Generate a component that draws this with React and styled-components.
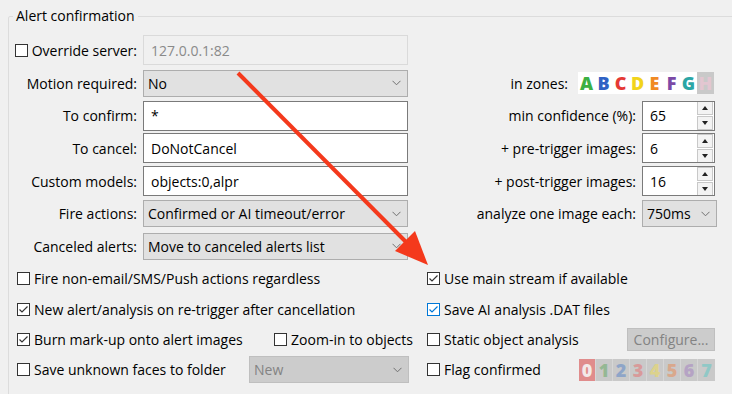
import React from 'react';
import styled, { createGlobalStyle, css } from 'styled-components';

const GlobalStyle = createGlobalStyle`
  html, body {
    margin: 0;
    padding: 0;
    background: #f0f0f0;
    overflow: hidden;
  }
  body {
    font-family: "Open Sans", "Noto Sans", sans-serif;
    font-size: 14px;
    color: #000;
  }
`;

const Page = styled.div`
  position: relative;
  width: 732px;
  height: 394px;
  padding: 6px 0 0 8px;
  box-sizing: border-box;
`;

const GroupBox = styled.fieldset`
  margin: 0;
  padding: 0 0 20px 0;
  width: 740px;
  border: 1px solid #dcdcdc;
  border-radius: 2px;
  box-sizing: border-box;
`;

const Legend = styled.legend`
  margin-left: 4px;
  padding: 0 3px;
  font-size: 14px;
  line-height: 20px;
`;

const FormGrid = styled.div`
  display: grid;
  grid-template-columns: 128px 265px 222px 75px;
  grid-auto-rows: 32.7px;
  column-gap: 6px;
  align-items: center;
  margin-top: 8px;
`;

const Label = styled.div`
  display: flex;
  align-items: center;
  justify-content: flex-end;
  gap: 4px;
  white-space: nowrap;
`;

const fieldBase = css`
  box-sizing: border-box;
  display: flex;
  align-items: center;
  padding: 0 7px;
  white-space: nowrap;
  overflow: hidden;
`;

const TextField = styled.div`
  ${fieldBase};
  height: 30px;
  background: ${(p) => (p.disabled ? '#f0f0f0' : '#fff')};
  border: 1px solid ${(p) => (p.disabled ? '#dadada' : '#7a7a7a')};
  color: ${(p) => (p.disabled ? '#8a8a8a' : '#000')};
`;

const Select = styled.div`
  ${fieldBase};
  height: 27px;
  justify-content: space-between;
  padding: 0 6px 0 4px;
  background: ${(p) => (p.disabled ? '#cccccc' : '#e1e1e1')};
  border: 1px solid ${(p) => (p.disabled ? '#bfbfbf' : '#adadad')};
  color: ${(p) => (p.disabled ? '#838383' : '#000')};
  width: ${(p) => p.width || 'auto'};
  margin-right: ${(p) => p.mr || '0'};
`;

const Chevron = () => (
  <svg width="9" height="6" viewBox="0 0 9 6">
    <polyline points="0.5,0.8 4.5,4.8 8.5,0.8" fill="none" stroke="#707070" strokeWidth="1" />
  </svg>
);

const Spin = styled.div`
  ${fieldBase};
  height: 30px;
  width: 73px;
  justify-content: space-between;
  padding: 0 1px 0 7px;
  background: #fff;
  border: 1px solid #7a7a7a;
`;

const SpinButtons = styled.div`
  display: flex;
  flex-direction: column;
  gap: 1px;
`;

const SpinButton = styled.div`
  width: 14px;
  height: 12px;
  border: 1px solid #c8c8c8;
  background: #f3f3f3;
  display: flex;
  align-items: center;
  justify-content: center;
`;

const Triangle = ({ down }) => (
  <svg width="6" height="4" viewBox="0 0 6 4">
    <polygon points={down ? '0,0 6,0 3,4' : '0,4 6,4 3,0'} fill="#222" />
  </svg>
);

const SpinBox = ({ value }) => (
  <Spin>
    <span>{value}</span>
    <SpinButtons>
      <SpinButton><Triangle /></SpinButton>
      <SpinButton><Triangle down /></SpinButton>
    </SpinButtons>
  </Spin>
);

const ZoneRow = styled.div`
  grid-column: 3 / span 2;
  display: flex;
  align-items: center;
  justify-content: flex-end;
  gap: 10px;
  padding-right: 3px;
`;

const Strip = styled.div`
  display: flex;
  height: 22px;
  background: ${(p) => p.bg || '#fff'};
`;

const Cell = styled.span`
  width: 17px;
  height: 22px;
  display: flex;
  align-items: center;
  justify-content: center;
  font-family: "Open Sans", "Noto Sans", sans-serif;
  font-weight: 800;
  font-size: 18px;
  color: ${(p) => p.color};
  background: ${(p) => p.bg || 'transparent'};
  border-right: ${(p) => (p.sep ? '1px solid #d6d6d6' : 'none')};
  box-sizing: border-box;
`;

const zones = [
  ['A', '#3cb043'],
  ['B', '#2f62c4'],
  ['C', '#e53935'],
  ['D', '#f2d41b'],
  ['E', '#f08a24'],
  ['F', '#7b4aa6'],
  ['G', '#2aa6a6'],
];

const digits = ['#f3e9e9', '#94b894', '#8ea5c8', '#d89a9a', '#dcd28c', '#d9a88c', '#b5a3c4', '#90c8c6'];

const BoxWrap = styled.span`
  width: 13px;
  height: 13px;
  box-sizing: border-box;
  border: 1px solid ${(p) => (p.accent ? '#0078d7' : '#333')};
  background: #fff;
  display: inline-flex;
  align-items: center;
  justify-content: center;
  flex: none;
`;

const CheckBox = ({ checked, accent }) => (
  <BoxWrap accent={accent}>
    {checked && (
      <svg width="11" height="11" viewBox="0 0 11 11">
        <polyline
          points="1.5,5.5 4,8 9.5,2.5"
          fill="none"
          stroke={accent ? '#0078d7' : '#333'}
          strokeWidth="1.2"
        />
      </svg>
    )}
  </BoxWrap>
);

const Check = styled.label`
  display: inline-flex;
  align-items: center;
  gap: 4px;
  white-space: nowrap;
`;

const OptionsGrid = styled.div`
  display: grid;
  grid-template-columns: 396px 288px;
  grid-auto-rows: 30.3px;
  column-gap: 14px;
  align-items: center;
  padding-left: 8px;
  margin-top: 1px;
`;

const OptionRow = styled.div`
  display: flex;
  align-items: center;
  justify-content: space-between;
`;

const Button = styled.div`
  height: 23px;
  width: 88px;
  box-sizing: border-box;
  display: flex;
  align-items: center;
  justify-content: center;
  background: #cccccc;
  border: 1px solid #bfbfbf;
  color: #838383;
`;

const ArrowLayer = styled.svg`
  position: absolute;
  left: 0;
  top: 0;
  pointer-events: none;
`;

const Arrow = () => (
  <ArrowLayer width="732" height="394">
    <line x1="238" y1="73" x2="408" y2="244" stroke="#f4391c" strokeWidth="4" />
    <polygon points="428,265 395,251 415,231" fill="#f4391c" />
  </ArrowLayer>
);

const App = () => (
  <>
    <GlobalStyle />
    <Page>
      <GroupBox>
        <Legend>Alert confirmation</Legend>
        <FormGrid>
          <Label>
            <CheckBox />
            Override server:
          </Label>
          <TextField disabled>127.0.0.1:82</TextField>
          <div />
          <div />

          <Label>Motion required:</Label>
          <Select>
            <span>No</span>
            <Chevron />
          </Select>
          <ZoneRow>
            <span>in zones:</span>
            <Strip>
              {zones.map(([l, c]) => (
                <Cell key={l} color={c}>{l}</Cell>
              ))}
              <Cell color="#e3c6d1" bg="#c9c9c9">H</Cell>
            </Strip>
          </ZoneRow>

          <Label>To confirm:</Label>
          <TextField>*</TextField>
          <Label>min confidence (%):</Label>
          <SpinBox value="65" />

          <Label>To cancel:</Label>
          <TextField>DoNotCancel</TextField>
          <Label>+ pre-trigger images:</Label>
          <SpinBox value="6" />

          <Label>Custom models:</Label>
          <TextField>objects:0,alpr</TextField>
          <Label>+ post-trigger images:</Label>
          <SpinBox value="16" />

          <Label>Fire actions:</Label>
          <Select>
            <span>Confirmed or AI timeout/error</span>
            <Chevron />
          </Select>
          <Label>analyze one image each:</Label>
          <Select>
            <span>750ms</span>
            <Chevron />
          </Select>

          <Label>Canceled alerts:</Label>
          <Select>
            <span>Move to canceled alerts list</span>
            <Chevron />
          </Select>
        </FormGrid>

        <OptionsGrid>
          <OptionRow>
            <Check><CheckBox />Fire non-email/SMS/Push actions regardless</Check>
          </OptionRow>
          <OptionRow>
            <Check><CheckBox checked />Use main stream if available</Check>
          </OptionRow>

          <OptionRow>
            <Check><CheckBox checked />New alert/analysis on re-trigger after cancellation</Check>
          </OptionRow>
          <OptionRow>
            <Check><CheckBox checked accent />Save AI analysis .DAT files</Check>
          </OptionRow>

          <OptionRow>
            <Check><CheckBox checked />Burn mark-up onto alert images</Check>
            <Check><CheckBox />Zoom-in to objects</Check>
          </OptionRow>
          <OptionRow>
            <Check><CheckBox />Static object analysis</Check>
            <Button>Configure...</Button>
          </OptionRow>

          <OptionRow>
            <Check><CheckBox />Save unknown faces to folder</Check>
            <Select disabled width="160px" mr="4px">
              <span>New</span>
              <Chevron />
            </Select>
          </OptionRow>
          <OptionRow>
            <Check><CheckBox />Flag confirmed</Check>
            <Strip bg="#c9c9c9">
              {digits.map((c, i) => (
                <Cell key={i} color={c} bg={i === 0 ? '#e08c8c' : undefined} sep={i < 7}>
                  {i}
                </Cell>
              ))}
            </Strip>
          </OptionRow>
        </OptionsGrid>
      </GroupBox>
      <Arrow />
    </Page>
  </>
);

export default App;
